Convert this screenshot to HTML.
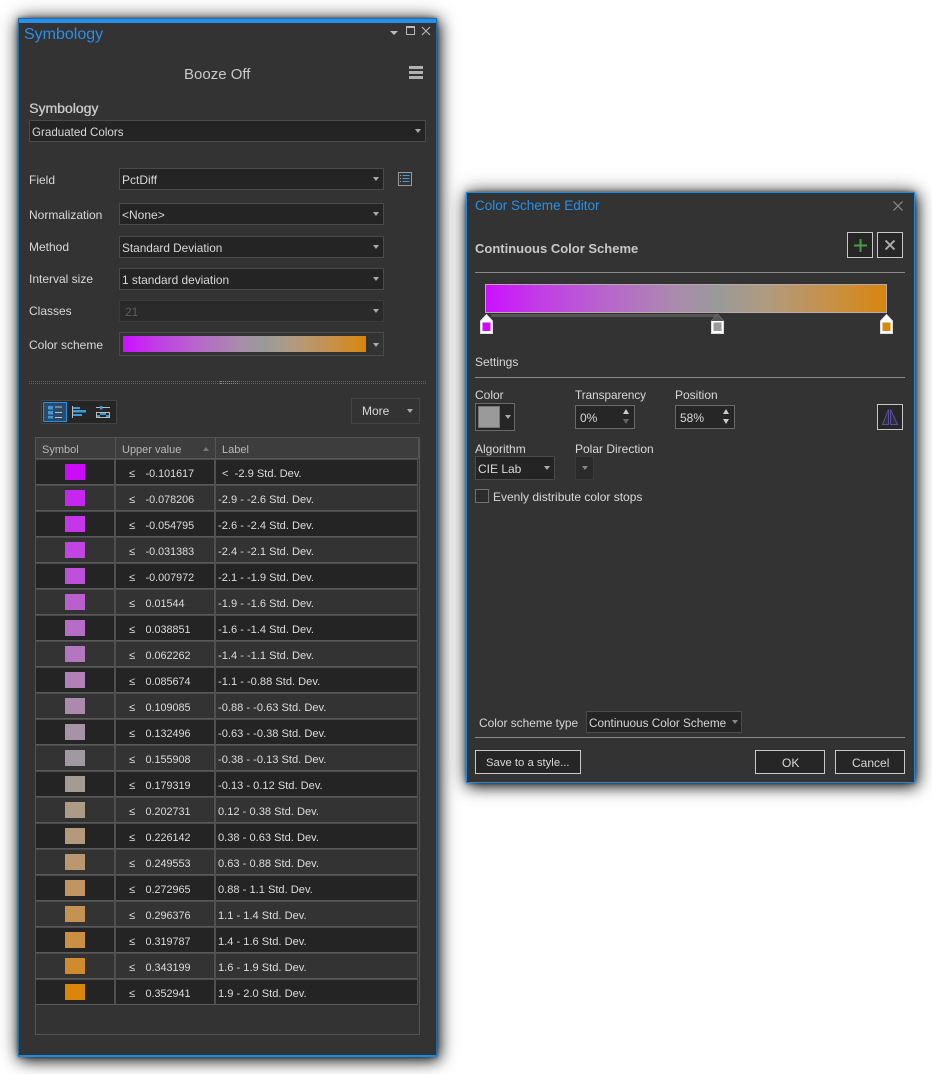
<!DOCTYPE html>
<html><head><meta charset="utf-8"><style>
html,body{margin:0;padding:0;background:#fff;width:932px;height:1074px;overflow:hidden}
body{position:relative;font:12px "Liberation Sans",sans-serif;color:#d8d8d8}
div,span,svg{position:absolute;box-sizing:border-box}
.t{white-space:nowrap;line-height:14px}
.panel{background:#333;box-shadow:2px 3px 14px rgba(0,0,0,.85),0 0 20px rgba(0,0,0,.4),0 0 4px rgba(0,0,0,.5)}
.c{background:#242424;border:1px solid #4b4b4b}
.a{width:0;height:0;border-left:3px solid transparent;border-right:3px solid transparent;border-top:4px solid #aaa}
.b{background:#262626;border:1px solid #c8c8c8}
.l{height:1px;background:#8a8a8a}
.r{left:36px;width:382px;height:26px;background:#333;border-top:1px solid #4c4c4c;border-bottom:1px solid #5a5a5a;border-right:1px solid #505050}
.d{background:#242424}
.r i{position:absolute;top:-1px;height:26px;width:2px;background:#505050}
.r .s{position:absolute;left:29px;top:4px;width:20px;height:16px}
.r span{white-space:nowrap;font-size:11.100px;line-height:14px;top:7px;color:#dcdcdc}
.r .le{left:93px}.r .v{left:109.500px;font-size:10.800px}.r .x{left:182px}
.h{font-size:11px;color:#b8b8b8}
</style></head><body>

<!-- Symbology panel -->
<div class="panel" style="left:18px;top:18px;width:419px;height:1039px;border:1px solid #1b6ca8;border-bottom:2px solid #1e88e5"></div>
<div style="left:19px;top:19px;width:417px;height:4px;background:#2a8fe8"></div>
<div class="t" style="left:24px;top:25px;font-size:16px;line-height:20px;color:#2a8fe8">Symbology</div>
<div class="a" style="left:390px;top:31px;border-left-width:4px;border-right-width:4px;border-top-width:4px;border-top-color:#bbb"></div>
<div style="left:406px;top:26px;width:9px;height:9px;border:1px solid #bbb;border-top-width:2px"></div>
<svg style="left:421px;top:26px" width="10" height="10"><path d="M1 1L9 9M9 1L1 9" stroke="#b4b4b4" stroke-width="1.2"/></svg>
<div class="t" style="left:184px;top:66px;font-size:15px;line-height:18px;color:#c8c8c8">Booze Off</div>
<div style="left:409px;top:66px;width:14px;height:3px;background:#b0b0b0"></div>
<div style="left:409px;top:71px;width:14px;height:3px;background:#b0b0b0"></div>
<div style="left:409px;top:76px;width:14px;height:3px;background:#b0b0b0"></div>
<div class="t" style="left:29px;top:100px;font-size:14px;line-height:16px;color:#c8c8c8;text-shadow:.4px 0 0 #c8c8c8">Symbology</div>

<div class="c" style="left:29px;top:120px;width:397px;height:22px"></div>
<div class="t" style="left:32px;top:126px;font-size:11.600px">Graduated Colors</div><div class="a" style="left:415px;top:129px"></div>

<div class="t" style="left:29px;top:173px">Field</div>
<div class="c" style="left:119px;top:168px;width:265px;height:22px"></div>
<div class="t" style="left:122px;top:173px">PctDiff</div><div class="a" style="left:373px;top:177px"></div>
<svg style="left:398px;top:172px" width="14" height="14"><rect x=".5" y=".5" width="13" height="13" fill="none" stroke="#9a9a9a"/><path d="M2 3.500h1M2 6.500h1M2 9.500h1" stroke="#9a9a9a"/><path d="M4.500 3.500h7M4.500 6.500h7M4.500 9.500h7" stroke="#3d9ad6"/></svg>

<div class="t" style="left:29px;top:208px">Normalization</div>
<div class="c" style="left:119px;top:203px;width:265px;height:22px"></div>
<div class="t" style="left:122px;top:208px">&lt;None&gt;</div><div class="a" style="left:373px;top:212px"></div>

<div class="t" style="left:29px;top:240px">Method</div>
<div class="c" style="left:119px;top:236px;width:265px;height:22px"></div>
<div class="t" style="left:122px;top:241px;font-size:11.800px">Standard Deviation</div><div class="a" style="left:373px;top:245px"></div>

<div class="t" style="left:29px;top:272px">Interval size</div>
<div class="c" style="left:119px;top:268px;width:265px;height:22px"></div>
<div class="t" style="left:122px;top:273px;font-size:11.900px">1 standard deviation</div><div class="a" style="left:373px;top:277px"></div>

<div class="t" style="left:29px;top:304px">Classes</div>
<div class="c" style="left:119px;top:300px;width:265px;height:22px;border-color:#3c3c3c;background:#2a2a2a"></div>
<div class="t" style="left:125px;top:305px;color:#5c5c5c">21</div><div class="a" style="left:373px;top:309px"></div>

<div class="t" style="left:29px;top:338px">Color scheme</div>
<div class="c" style="left:119px;top:332px;width:265px;height:24px;background:#333"></div>
<div style="left:123px;top:336px;width:243px;height:16px;background:linear-gradient(90deg,#cc10ff 0%,#c23ee6 14%,#b865cc 30%,#a98cac 48%,#9a9a9a 58%,#b09a80 70%,#c4924f 84%,#d9860e 100%)"></div>
<div class="a" style="left:373px;top:343px"></div>

<div style="left:29px;top:381px;width:397px;height:3px;border-top:1px dotted #606060;border-bottom:1px dotted #606060"></div>
<div style="left:220px;top:381px;width:18px;height:3px;background:#333;border-top:1px dotted #8a8a8a;border-bottom:1px dotted #8a8a8a"></div>

<div style="left:41px;top:400px;width:76px;height:24px;background:#262626;border:1px solid #444"></div>
<div style="left:43px;top:402px;width:24px;height:20px;background:#2a4a68;border:1px solid #2a8fe8"></div>
<svg style="left:47px;top:404px" width="66" height="16"><path d="M1 2h5v3.500H1zM1 7h5v3.500H1zM1 12h5v2.500H1z" fill="#3d9ad6"/><path d="M8 3h7M8 8.500h7M8 13.500h7" stroke="#c0c0c0"/><path d="M25.500 2v12" stroke="#bbb"/><path d="M26 3h7v2h-7zM26 6h13v2.500H26zM26 10h9v2h-9z" fill="#3d9ad6"/><path d="M49 3.500h14" stroke="#bbb"/><path d="M53 2h2.500v3.500H53z" fill="#3d9ad6"/><path d="M49.500 8.500h13v5h-13z" fill="none" stroke="#bbb"/><path d="M53 9h6v2h-6zM50 11h3v2h-3zM59 11h3v2h-3z" fill="#3d9ad6"/></svg>
<div style="left:351px;top:398px;width:69px;height:26px;border:1px solid #444"></div>
<div class="t" style="left:362px;top:404px">More</div><div class="a" style="left:407px;top:409px"></div>

<!-- Table -->
<div style="left:35px;top:437px;width:385px;height:598px;border:1px solid #555;background:#333"></div>
<div style="left:36px;top:438px;width:382px;height:20px;background:#3d3d3d"></div>
<div style="left:36px;top:458px;width:383px;height:1px;background:#555"></div>
<div style="left:115px;top:438px;width:1px;height:21px;background:#555"></div>
<div style="left:215px;top:438px;width:1px;height:21px;background:#555"></div>
<div style="left:418px;top:438px;width:1px;height:21px;background:#555"></div>
<div class="t h" style="left:42px;top:443px">Symbol</div>
<div class="t h" style="left:122px;top:443px">Upper value</div>
<div style="left:203px;top:447px;width:0;height:0;border-left:3.500px solid transparent;border-right:3.500px solid transparent;border-bottom:4px solid #777"></div>
<div class="t h" style="left:222px;top:443px">Label</div>

<div class="r d" style="top:459px"><i style="left:78px"></i><i style="left:178px"></i><b class="s" style="background:#cc0cf9"></b><span class="le">≤</span><span class="v">-0.101617</span><span class="x" style="left:186px">&lt;&nbsp; -2.9 Std. Dev.</span></div>
<div class="r" style="top:485px"><i style="left:78px"></i><i style="left:178px"></i><b class="s" style="background:#c627ee"></b><span class="le">≤</span><span class="v">-0.078206</span><span class="x">-2.9 - -2.6 Std. Dev.</span></div>
<div class="r d" style="top:511px"><i style="left:78px"></i><i style="left:178px"></i><b class="s" style="background:#c436e8"></b><span class="le">≤</span><span class="v">-0.054795</span><span class="x">-2.6 - -2.4 Std. Dev.</span></div>
<div class="r" style="top:537px"><i style="left:78px"></i><i style="left:178px"></i><b class="s" style="background:#c145e2"></b><span class="le">≤</span><span class="v">-0.031383</span><span class="x">-2.4 - -2.1 Std. Dev.</span></div>
<div class="r d" style="top:563px"><i style="left:78px"></i><i style="left:178px"></i><b class="s" style="background:#be50dc"></b><span class="le">≤</span><span class="v">-0.007972</span><span class="x">-2.1 - -1.9 Std. Dev.</span></div>
<div class="r" style="top:589px"><i style="left:78px"></i><i style="left:178px"></i><b class="s" style="background:#ba60ce"></b><span class="le">≤</span><span class="v">0.01544</span><span class="x">-1.9 - -1.6 Std. Dev.</span></div>
<div class="r d" style="top:615px"><i style="left:78px"></i><i style="left:178px"></i><b class="s" style="background:#b76cc6"></b><span class="le">≤</span><span class="v">0.038851</span><span class="x">-1.6 - -1.4 Std. Dev.</span></div>
<div class="r" style="top:641px"><i style="left:78px"></i><i style="left:178px"></i><b class="s" style="background:#b476be"></b><span class="le">≤</span><span class="v">0.062262</span><span class="x">-1.4 - -1.1 Std. Dev.</span></div>
<div class="r d" style="top:667px"><i style="left:78px"></i><i style="left:178px"></i><b class="s" style="background:#b080b6"></b><span class="le">≤</span><span class="v">0.085674</span><span class="x">-1.1 - -0.88 Std. Dev.</span></div>
<div class="r" style="top:693px"><i style="left:78px"></i><i style="left:178px"></i><b class="s" style="background:#ab8aae"></b><span class="le">≤</span><span class="v">0.109085</span><span class="x">-0.88 - -0.63 Std. Dev.</span></div>
<div class="r d" style="top:719px"><i style="left:78px"></i><i style="left:178px"></i><b class="s" style="background:#a593a6"></b><span class="le">≤</span><span class="v">0.132496</span><span class="x">-0.63 - -0.38 Std. Dev.</span></div>
<div class="r" style="top:745px"><i style="left:78px"></i><i style="left:178px"></i><b class="s" style="background:#9f9a9f"></b><span class="le">≤</span><span class="v">0.155908</span><span class="x">-0.38 - -0.13 Std. Dev.</span></div>
<div class="r d" style="top:771px"><i style="left:78px"></i><i style="left:178px"></i><b class="s" style="background:#a49c92"></b><span class="le">≤</span><span class="v">0.179319</span><span class="x">-0.13 - 0.12 Std. Dev.</span></div>
<div class="r" style="top:797px"><i style="left:78px"></i><i style="left:178px"></i><b class="s" style="background:#ac9b85"></b><span class="le">≤</span><span class="v">0.202731</span><span class="x">0.12 - 0.38 Std. Dev.</span></div>
<div class="r d" style="top:823px"><i style="left:78px"></i><i style="left:178px"></i><b class="s" style="background:#b4997a"></b><span class="le">≤</span><span class="v">0.226142</span><span class="x">0.38 - 0.63 Std. Dev.</span></div>
<div class="r" style="top:849px"><i style="left:78px"></i><i style="left:178px"></i><b class="s" style="background:#ba976e"></b><span class="le">≤</span><span class="v">0.249553</span><span class="x">0.63 - 0.88 Std. Dev.</span></div>
<div class="r d" style="top:875px"><i style="left:78px"></i><i style="left:178px"></i><b class="s" style="background:#c09561"></b><span class="le">≤</span><span class="v">0.272965</span><span class="x">0.88 - 1.1 Std. Dev.</span></div>
<div class="r" style="top:901px"><i style="left:78px"></i><i style="left:178px"></i><b class="s" style="background:#c59252"></b><span class="le">≤</span><span class="v">0.296376</span><span class="x">1.1 - 1.4 Std. Dev.</span></div>
<div class="r d" style="top:927px"><i style="left:78px"></i><i style="left:178px"></i><b class="s" style="background:#ca8f42"></b><span class="le">≤</span><span class="v">0.319787</span><span class="x">1.4 - 1.6 Std. Dev.</span></div>
<div class="r" style="top:953px"><i style="left:78px"></i><i style="left:178px"></i><b class="s" style="background:#d08b2e"></b><span class="le">≤</span><span class="v">0.343199</span><span class="x">1.6 - 1.9 Std. Dev.</span></div>
<div class="r d" style="top:979px"><i style="left:78px"></i><i style="left:178px"></i><b class="s" style="background:#d9860a"></b><span class="le">≤</span><span class="v">0.352941</span><span class="x">1.9 - 2.0 Std. Dev.</span></div>

<!-- Color Scheme Editor -->
<div class="panel" style="left:466px;top:192px;width:449px;height:591px;border:1px solid #1e88e5"></div>
<div class="t" style="left:475px;top:198px;font-size:13.500px;line-height:15px;color:#2a8fe8">Color Scheme Editor</div>
<svg style="left:893px;top:201px" width="10" height="10"><path d="M.5.500L9.500 9.500M9.500.500L.5 9.500" stroke="#8c8c8c" stroke-width="1.200"/></svg>
<div class="t" style="left:475px;top:241px;font-size:13px;line-height:15px;font-weight:bold;color:#c8c8c8">Continuous Color Scheme</div>
<div class="b" style="left:847px;top:232px;width:26px;height:26px"></div>
<svg style="left:854px;top:239px" width="13" height="13"><path d="M6.500 0v13M0 6.500h13" stroke="#4f9a45" stroke-width="2"/></svg>
<div class="b" style="left:877px;top:232px;width:26px;height:26px"></div>
<svg style="left:885px;top:240px" width="10" height="10"><path d="M.5.500L9.500 9.500M9.500.500L.5 9.500" stroke="#aaa" stroke-width="2"/></svg>
<div class="l" style="left:475px;top:272px;width:430px"></div>

<div style="left:485px;top:284px;width:402px;height:29px;border:1px solid #b8a8b0;background:linear-gradient(90deg,#cc10ff 0%,#c23ee6 14%,#b865cc 30%,#a98cac 48%,#9a9a9a 58%,#b09a80 70%,#c4924f 84%,#d9860e 100%)"></div>
<div style="left:491px;top:314px;width:226px;height:3px;background:#555"></div>
<svg style="left:480px;top:314px" width="13" height="20"><path d="M.5 19.500V7L6.500 .5 12.500 7V19.500z" fill="#fff" stroke="#ddd"/><rect x="2.500" y="8.500" width="8" height="8.500" fill="#cc0cf9"/></svg>
<svg style="left:711px;top:314px" width="13" height="20"><path d="M.5 19.500V7L6.500 .5 12.500 7V19.500z" fill="#fff" stroke="#ddd"/><path d="M0 7L6.500 0 13 7z" fill="#555"/><rect x="2.500" y="8.500" width="8" height="8.500" fill="#9a9a9a"/></svg>
<svg style="left:880px;top:314px" width="13" height="20"><path d="M.5 19.500V7L6.500 .5 12.500 7V19.500z" fill="#fff" stroke="#ddd"/><rect x="2.500" y="8.500" width="8" height="8.500" fill="#d9860a"/></svg>

<div class="t" style="left:475px;top:355px">Settings</div>
<div class="l" style="left:475px;top:377px;width:430px"></div>

<div class="t" style="left:475px;top:388px">Color</div>
<div style="left:475px;top:403px;width:40px;height:28px;background:#262626;border:1px solid #6a6a6a"></div>
<div style="left:478px;top:406px;width:22px;height:22px;background:#9a9a9a;border:1px solid #777"></div>
<div class="a" style="left:505px;top:415px;border-left-width:3.500px;border-right-width:3.500px"></div>

<div class="t" style="left:575px;top:389px;font-size:11.700px">Transparency</div>
<div style="left:575px;top:405px;width:60px;height:24px;background:#262626;border:1px solid #6a6a6a"></div>
<div class="t" style="left:580px;top:411px">0%</div>
<div style="left:623px;top:409px;width:0;height:0;border-left:3.500px solid transparent;border-right:3.500px solid transparent;border-bottom:5px solid #ccc"></div>
<div style="left:623px;top:419px;width:0;height:0;border-left:3.500px solid transparent;border-right:3.500px solid transparent;border-top:5px solid #666"></div>

<div class="t" style="left:675px;top:388px">Position</div>
<div style="left:675px;top:405px;width:60px;height:24px;background:#262626;border:1px solid #6a6a6a"></div>
<div class="t" style="left:680px;top:411px">58%</div>
<div style="left:723px;top:409px;width:0;height:0;border-left:3.500px solid transparent;border-right:3.500px solid transparent;border-bottom:5px solid #ccc"></div>
<div style="left:723px;top:419px;width:0;height:0;border-left:3.500px solid transparent;border-right:3.500px solid transparent;border-top:5px solid #ccc"></div>

<div class="b" style="left:877px;top:404px;width:26px;height:26px"></div>
<svg style="left:881px;top:408px" width="18" height="18"><path d="M7.500 1.500V16.500H1.500zM9.500 1.500V16.500H16.500z" fill="#2f2f3a" stroke="#5a4f9a"/></svg>

<div class="t" style="left:475px;top:442px">Algorithm</div>
<div class="c" style="left:475px;top:456px;width:80px;height:24px"></div>
<div class="t" style="left:478px;top:462px">CIE Lab</div><div class="a" style="left:544px;top:466px"></div>

<div class="t" style="left:575px;top:442px">Polar Direction</div>
<div class="c" style="left:575px;top:456px;width:19px;height:24px;border-color:#3a3a3a;background:#2a2a2a"></div>
<div class="a" style="left:582px;top:466px;border-top-color:#888"></div>

<div style="left:475px;top:489px;width:14px;height:14px;background:#2c2c2c;border:1px solid #707070"></div>
<div class="t" style="left:493px;top:490px">Evenly distribute color stops</div>

<div class="t" style="left:479px;top:716px;font-size:11.900px">Color scheme type</div>
<div class="c" style="left:586px;top:711px;width:156px;height:22px"></div>
<div class="t" style="left:589px;top:717px;font-size:11.750px">Continuous Color Scheme</div><div class="a" style="left:732px;top:720px;border-top-color:#888"></div>
<div class="l" style="left:475px;top:737px;width:430px"></div>

<div class="b" style="left:475px;top:750px;width:106px;height:24px"></div>
<div class="t" style="left:486px;top:756px;font-size:11.300px">Save to a style...</div>
<div class="b" style="left:755px;top:750px;width:70px;height:24px"></div>
<div class="t" style="left:782px;top:756px">OK</div>
<div class="b" style="left:835px;top:750px;width:70px;height:24px"></div>
<div class="t" style="left:852px;top:756px">Cancel</div>

</body></html>
